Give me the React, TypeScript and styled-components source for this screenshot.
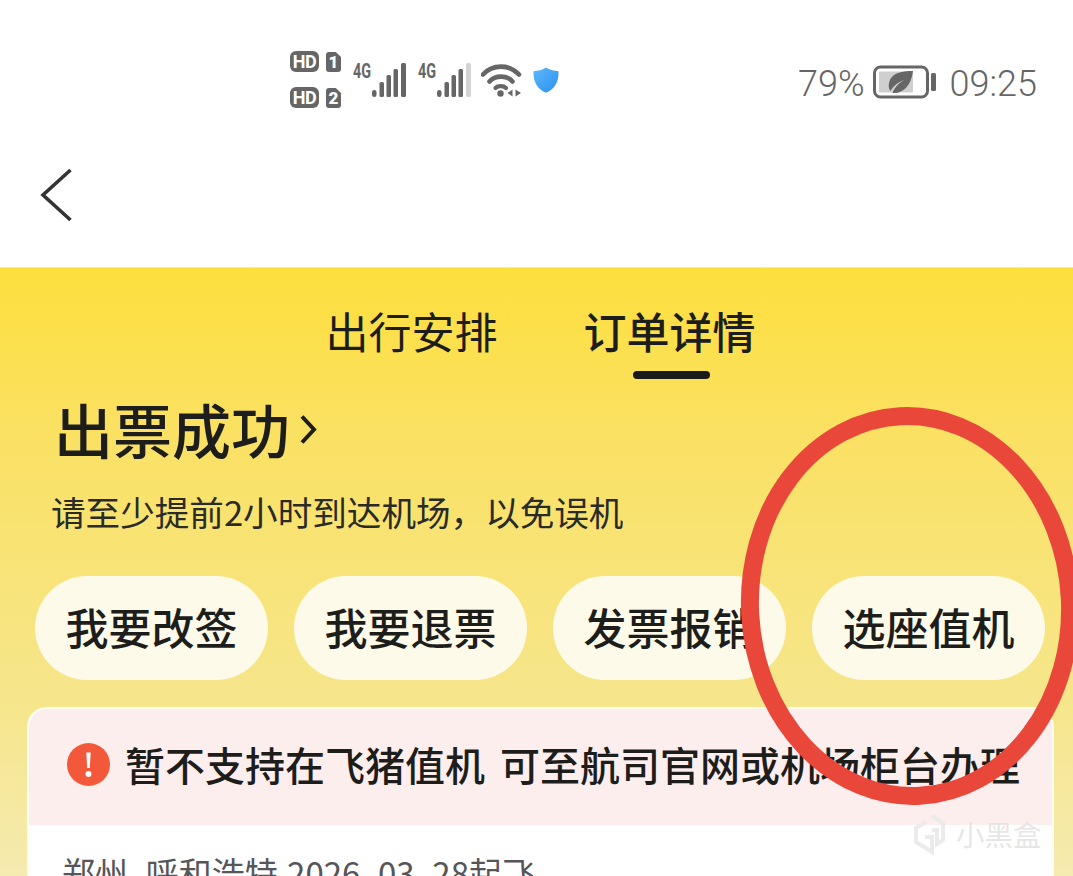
import { createGlobalStyle } from 'styled-components'
import styled from 'styled-components'

const GlobalStyle = createGlobalStyle`
  html, body {
    margin: 0;
    padding: 0;
    background: #fff;
    font-family: "Noto Sans CJK SC", "Noto Sans", sans-serif;
  }
`

const Page = styled.div`
  position: relative;
  width: 1073px;
  height: 876px;
  overflow: hidden;
  background: #fff;
`

const StatusBar = styled.div`
  height: 150px;
  box-sizing: border-box;
  padding: 51px 36px 0 290px;
  display: flex;
  justify-content: space-between;
  align-items: flex-start;
  color: #666;
`

const StatusIcons = styled.div`
  display: flex;
  align-items: flex-start;
`

const SimColumn = styled.div`
  display: flex;
  flex-direction: column;
  gap: 15px;
  margin-right: 12px;
`

const SimRow = styled.div`
  display: flex;
  gap: 7px;
  height: 21px;
`

const HdBadge = styled.span`
  width: 29px;
  height: 21px;
  border-radius: 6px;
  background: #666;
  color: #fff;
  font: 700 18px/21px "Roboto", sans-serif;
  letter-spacing: -0.5px;
  text-align: center;
`

const SimBadge = styled.span`
  width: 15px;
  height: 20px;
  margin-top: 1px;
  border-radius: 3px;
  clip-path: polygon(0 0, 65% 0, 100% 25%, 100% 100%, 0 100%);
  background: #666;
  color: #fff;
  font: 900 17px/20px "Roboto", sans-serif;
  text-align: center;
`

const Signal = styled.div<{ $gap: number }>`
  display: flex;
  align-items: flex-start;
  margin-top: 12px;
  margin-right: ${p => p.$gap}px;
`

const NetLabel = styled.span`
  width: 19px;
  font: 700 20px/16px "Roboto", sans-serif;
  transform: scaleX(0.72);
  transform-origin: left top;
  color: #666;
`

const WifiIcon = styled.svg`
  margin-top: 12px;
  margin-right: 11px;
`

const ShieldIcon = styled.svg`
  margin-top: 16px;
`

const Clock = styled.div`
  display: flex;
  align-items: center;
  height: 62px;
  margin-top: 2px;
  font: 300 36px/62px "Roboto", sans-serif;
  color: #666;
`

const BatteryIcon = styled.svg`
  margin: 0 13px 4px 8px;
`

const NavBar = styled.div`
  height: 117px;
  padding: 18px 0 0 40px;
  box-sizing: border-box;
`

const Main = styled.main`
  height: 609px;
  border-top: 1px solid #f4e9a8;
  box-sizing: border-box;
  background: linear-gradient(180deg, #fddf3c 0%, #fae164 28%, #f6e68c 72%, #f5eab0 100%);
`

const Tabs = styled.div`
  display: flex;
  justify-content: center;
  gap: 86px;
  padding: 32px 0 0;
  height: 112px;
  box-sizing: border-box;
  margin-left: 8px;
`

const Tab = styled.div<{ $active?: boolean }>`
  position: relative;
  font-size: 43px;
  line-height: 60px;
  font-weight: ${p => (p.$active ? 500 : 400)};
  color: #1d1d1b;
  &::after {
    content: '';
    display: ${p => (p.$active ? 'block' : 'none')};
    position: absolute;
    left: 49px;
    top: 71px;
    width: 77px;
    height: 8px;
    border-radius: 4px;
    background: #1a1a18;
  }
`

const Title = styled.h1`
  display: flex;
  align-items: center;
  margin: 14px 0 0 54px;
  font-size: 59px;
  line-height: 70px;
  font-weight: 500;
  color: #1d1d1b;
`

const TitleChevron = styled.svg`
  margin-left: 10px;
`

const Subtitle = styled.p`
  margin: 24px 0 0 51px;
  font-size: 34.6px;
  line-height: 46px;
  color: #2a2a26;
`

const Pills = styled.div`
  display: flex;
  gap: 26px;
  margin: 42px 0 0 35px;
`

const Pill = styled.div`
  width: 233px;
  height: 104px;
  border-radius: 52px;
  background: #fdfae9;
  font-size: 43px;
  font-weight: 500;
  line-height: 100px;
  text-align: center;
  color: #1d1d1b;
`

const Card = styled.section`
  margin: 27px 19px 0 27px;
  border: 2px solid #fefdf4;
  border-bottom: 0;
  border-radius: 20px 20px 0 0;
  background: #fff;
  overflow: hidden;
  height: 240px;
`

const Notice = styled.div`
  display: flex;
  align-items: center;
  box-sizing: border-box;
  height: 116px;
  padding: 0 0 6px 38px;
  background: #fdeeee;
  font-size: 40px;
  font-weight: 500;
  color: #1d1d1b;
  white-space: nowrap;
`

const NoticeIcon = styled.svg`
  margin-right: 15px;
  flex: none;
`

const NoticeGap = styled.span`
  width: 15px;
`

const Route = styled.div`
  padding: 24px 0 0 33px;
  font-size: 33px;
  line-height: 46px;
  word-spacing: 2px;
  color: #55555a;
  white-space: nowrap;
`

const Mark = styled.svg`
  position: absolute;
  left: 0;
  top: 0;
  pointer-events: none;
`

const Watermark = styled.div`
  position: absolute;
  left: 912px;
  top: 813px;
  display: flex;
  align-items: center;
  gap: 9px;
  color: rgba(226, 226, 226, 0.85);
  font-size: 28.5px;
  line-height: 42px;
`

function SignalBars({ last }: { last: string }) {
  return (
    <svg width="36" height="34" viewBox="0 0 36 34">
      <rect x="0" y="27" width="4.5" height="7" rx="2.2" fill="#666" />
      <rect x="7.5" y="19" width="4.5" height="15" rx="1.5" fill="#666" />
      <rect x="14.5" y="12" width="4.5" height="22" rx="1.5" fill="#666" />
      <rect x="21.5" y="6" width="4.5" height="28" rx="1.5" fill="#666" />
      <rect x="29" y="0" width="5" height="34" rx="1.5" fill={last} />
    </svg>
  )
}

export default function App() {
  return (
    <Page>
      <GlobalStyle />
      <StatusBar>
        <StatusIcons>
          <SimColumn>
            <SimRow>
              <HdBadge>HD</HdBadge>
              <SimBadge>1</SimBadge>
            </SimRow>
            <SimRow>
              <HdBadge>HD</HdBadge>
              <SimBadge>2</SimBadge>
            </SimRow>
          </SimColumn>
          <Signal $gap={10}>
            <NetLabel>4G</NetLabel>
            <SignalBars last="#666" />
          </Signal>
          <Signal $gap={8}>
            <NetLabel>4G</NetLabel>
            <SignalBars last="#d4d4d4" />
          </Signal>
          <WifiIcon width="41" height="34" viewBox="0 0 41 34" fill="none">
            <path d="M2 11.5C11.5 1 28.5 1 38 11.5" stroke="#666" strokeWidth="4.6" strokeLinecap="round" />
            <path d="M8.5 18.5C14 12 26 12 31.5 18.5" stroke="#666" strokeWidth="4.6" strokeLinecap="round" />
            <path d="M14.5 25C17 22.5 22.5 22.5 25 25" stroke="#666" strokeWidth="4.2" strokeLinecap="round" />
            <circle cx="19.5" cy="30.5" r="3.2" fill="#666" />
            <path d="M31.5 26.5V33.5L26.5 30Z" fill="#666" />
            <path d="M34.5 26.5V33.5L40 30Z" fill="#666" />
          </WifiIcon>
          <ShieldIcon width="26" height="26" viewBox="0 0 26 26">
            <defs>
              <linearGradient id="shield" x1="0" y1="0" x2="1" y2="1">
                <stop offset="0" stopColor="#5db8fa" />
                <stop offset="1" stopColor="#2b8ff0" />
              </linearGradient>
            </defs>
            <path d="M13 0.5C16.5 2.8 21 4 25.5 4.2C26 14 22 22 13 25.8C4 22 0 14 0.5 4.2C5 4 9.5 2.8 13 0.5Z" fill="url(#shield)" />
          </ShieldIcon>
        </StatusIcons>
        <Clock>
          79%
          <BatteryIcon width="64" height="34" viewBox="0 0 64 34" fill="none">
            <rect x="1.5" y="2" width="53" height="30" rx="6" stroke="#666" strokeWidth="3" />
            <rect x="6" y="6.5" width="34" height="21" rx="1" fill="#cfcfcf" />
            <path d="M40 6C28 6 18 8 16 18C15.2 21.5 16 24 17.5 26C21 20 26 17 31 15C26 18 21 23 19.5 28C30 29 38 21 40 6Z" fill="#666" />
            <rect x="58" y="8" width="5" height="18" rx="1.5" fill="#666" />
          </BatteryIcon>
          09:25
        </Clock>
      </StatusBar>
      <NavBar>
        <svg width="36" height="54" viewBox="0 0 36 54" fill="none">
          <path d="M30.5 2L3 27L30.5 52" stroke="#333" strokeWidth="3.6" />
        </svg>
      </NavBar>
      <Main>
        <Tabs>
          <Tab>出行安排</Tab>
          <Tab $active>订单详情</Tab>
        </Tabs>
        <Title>
          出票成功
          <TitleChevron width="17" height="31" viewBox="0 0 17 31" fill="none">
            <path d="M2 2.5L14 15.5L2 28.5" stroke="#1d1d1b" strokeWidth="4" />
          </TitleChevron>
        </Title>
        <Subtitle>请至少提前2小时到达机场，以免误机</Subtitle>
        <Pills>
          <Pill>我要改签</Pill>
          <Pill>我要退票</Pill>
          <Pill>发票报销</Pill>
          <Pill>选座值机</Pill>
        </Pills>
        <Card>
          <Notice>
            <NoticeIcon width="43" height="43" viewBox="0 0 43 43">
              <circle cx="21.5" cy="21.5" r="21.5" fill="#f4583a" />
              <path d="M19.3 9.5H23.7L22.8 25H20.2Z" fill="#fff" />
              <circle cx="21.5" cy="31" r="3" fill="#fff" />
            </NoticeIcon>
            暂不支持在飞猪值机
            <NoticeGap />
            可至航司官网或机场柜台办理
          </Notice>
          <Route>郑州–呼和浩特 2026–03–28起飞</Route>
        </Card>
      </Main>
      <Mark width="1073" height="876" viewBox="0 0 1073 876" fill="none">
        <ellipse cx="910" cy="606" rx="160" ry="190" transform="rotate(-3 910 606)" stroke="#e8473a" strokeWidth="18" />
      </Mark>
      <Watermark>
        <svg width="35" height="42" viewBox="0 0 35 42" fill="none">
          <path d="M14 9L4 15V29L20 39V24H13" stroke="#e8e8e8" strokeOpacity="0.85" strokeWidth="4" />
          <path d="M20 3L31 10V27L25 31V17H20" stroke="#e8e8e8" strokeOpacity="0.85" strokeWidth="4" />
        </svg>
        小黑盒
      </Watermark>
    </Page>
  )
}
